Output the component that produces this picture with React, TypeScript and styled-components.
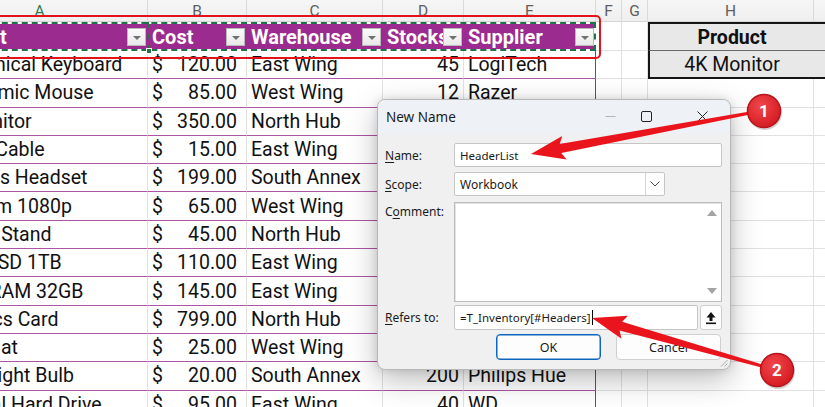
import React from 'react';
import styled, { createGlobalStyle } from 'styled-components';

const GlobalStyle = createGlobalStyle`
  html, body { margin: 0; padding: 0; background: #fff; }
  body { font-family: Roboto, "Liberation Sans", sans-serif; }
  * { box-sizing: border-box; }
`;

const PURPLE = '#9b2b8e';
const ROW_LINE = '#ad54a3';
const GRID = '#e1e1e1';

// sheet column widths (A is partly scrolled out of view)
const W = { A: 216, B: 99, C: 136, D: 81, E: 132, F: 26, G: 26, H: 166, I: 80 };

type Item = [string, number, string, number, string];

const items: Item[] = [
  ['Mechanical Keyboard', 120, 'East Wing', 45, 'LogiTech'],
  ['Ergonomic Mouse', 85, 'West Wing', 12, 'Razer'],
  ['4K Monitor', 350, 'North Hub', 30, 'Dell'],
  ['USB-C Cable', 15, 'East Wing', 300, 'Anker'],
  ['Wireless Headset', 199, 'South Annex', 25, 'Sony'],
  ['Webcam 1080p', 65, 'West Wing', 60, 'Logitech'],
  ['Laptop Stand', 45, 'North Hub', 35, 'Ergotron'],
  ['Gen4 SSD 1TB', 110, 'East Wing', 50, 'Samsung'],
  ['DDR5 RAM 32GB', 145, 'East Wing', 40, 'Corsair'],
  ['Graphics Card', 799, 'North Hub', 8, 'NVIDIA'],
  ['Desk Mat', 25, 'West Wing', 150, 'SteelSeries'],
  ['Color Light Bulb', 20, 'South Annex', 200, 'Philips Hue'],
  ['External Hard Drive', 95, 'East Wing', 40, 'WD'],
];

const Screen = styled.div`
  position: relative;
  width: 825px;
  height: 407px;
  overflow: hidden;
  background: #fff;
`;

const Sheet = styled.div`
  display: flex;
  flex-direction: column;
  width: max-content;
  margin-left: -68px;
  font-size: 19.5px;
  color: #111;
`;

const Row = styled.div<{ $h: number }>`
  display: flex;
  height: ${p => p.$h}px;
`;

const Letters = styled.div<{ $w: number; $active?: boolean }>`
  width: ${p => p.$w}px;
  display: flex;
  align-items: center;
  justify-content: center;
  background: linear-gradient(#f6f6f6, #efefef);
  border-right: 1px solid #dadada;
  border-bottom: 1px solid #d4d4d4;
  font-size: 15.5px;
  color: ${p => (p.$active ? '#2e7d52' : '#5e5e5e')};
`;

const Group = styled.div`
  position: relative;
  display: flex;
`;

const HeadGroup = styled(Group)`
  background: ${PURPLE};
  &::before {
    content: '';
    position: absolute;
    inset: 0;
    border: 2px solid #fff;
    pointer-events: none;
  }
  &::after {
    content: '';
    position: absolute;
    inset: 0;
    border: 2px dashed #217346;
    pointer-events: none;
  }
`;

const RedFrame = styled.span`
  position: absolute;
  top: -7px;
  bottom: -8px;
  left: -10px;
  right: -5px;
  border: 2px solid #e3131b;
  border-radius: 5px;
  z-index: 2;
`;

const HeadCell = styled.div<{ $w: number; $active?: boolean }>`
  position: relative;
  width: ${p => p.$w}px;
  display: flex;
  align-items: center;
  padding-left: 4px;
  color: #fff;
  font-size: 20px;
  font-weight: 700;
  overflow: hidden;
  white-space: nowrap;
  ${p =>
    p.$active &&
    `
    overflow: visible;
    &::after {
      content: '';
      position: absolute;
      top: 0;
      bottom: 0;
      right: -1px;
      border-right: 2px dashed #217346;
      z-index: 1;
    }
  `}
`;

const FillHandle = styled.span`
  position: absolute;
  right: -4px;
  bottom: -3px;
  width: 6px;
  height: 6px;
  background: #217346;
  border: 1px solid #fff;
  z-index: 3;
`;

const FilterButton = styled.span`
  position: absolute;
  right: 2px;
  top: 6px;
  width: 19px;
  height: 18px;
  background: linear-gradient(#fbfbfb, #e9e9e9);
  border: 1px solid #b9b9b9;
  display: flex;
  align-items: center;
  justify-content: center;
  &::after {
    content: '';
    margin-top: 2px;
    border-left: 4px solid transparent;
    border-right: 4px solid transparent;
    border-top: 4px solid #707070;
  }
`;

const Cell = styled.div<{ $w: number; $align?: 'left' | 'right'; $edge?: boolean }>`
  width: ${p => p.$w}px;
  display: flex;
  align-items: center;
  justify-content: ${p => (p.$align === 'right' ? 'flex-end' : 'flex-start')};
  padding: 0 ${p => (p.$align === 'right' ? 4 : 0)}px 0 4px;
  border-bottom: 1px solid ${ROW_LINE};
  border-right: 1px solid ${p => (p.$edge ? PURPLE : GRID)};
  white-space: nowrap;
  overflow: hidden;
`;

const MoneyCell = styled(Cell)`
  justify-content: space-between;
  padding-right: 9px;
`;

const Blank = styled.div<{ $w: number }>`
  width: ${p => p.$w}px;
  border-right: 1px solid ${GRID};
  border-bottom: 1px solid ${GRID};
`;

const LookupCell = styled.div<{ $w: number; $bold?: boolean; $first?: boolean; $last?: boolean; $lead?: boolean }>`
  width: ${p => p.$w}px;
  display: flex;
  align-items: center;
  justify-content: center;
  background: #e8e8e8;
  font-weight: ${p => (p.$bold ? 700 : 400)};
  border-left: ${p => (p.$lead ? '2px solid #151515' : 'none')};
  border-top: ${p => (p.$first ? '2px solid #151515' : 'none')};
  border-bottom: ${p => (p.$last ? '2px solid #151515' : '1px solid #6a6a6a')};
`;

/* ---- dialog ---- */

const Dialog = styled.div`
  position: absolute;
  left: 377px;
  top: 99px;
  width: 354px;
  height: 271px;
  display: flex;
  flex-direction: column;
  background: #f0f0f0;
  border: 1px solid #b8b8b8;
  border-radius: 8px;
  box-shadow: 0 10px 30px rgba(0, 0, 0, 0.26), 0 0 8px rgba(0, 0, 0, 0.12);
  font-family: 'Noto Sans', 'Open Sans', sans-serif;
  font-size: 12px;
  color: #1b1b1b;
  overflow: hidden;
`;

const TitleBar = styled.div`
  height: 33px;
  display: flex;
  align-items: center;
  padding-left: 8px;
  background: #eef2f7;
  font-size: 13.5px;
`;

const TitleText = styled.span`
  flex: 1;
`;

const WinIcon = styled.span<{ $gap: number }>`
  display: flex;
  margin-left: ${p => p.$gap}px;
`;

const Body = styled.div`
  display: flex;
  flex-direction: column;
  padding: 10px 8px 0 7px;
`;

const Field = styled.div<{ $h: number; $mt?: number }>`
  display: grid;
  grid-template-columns: 69px 1fr;
  height: ${p => p.$h}px;
  margin-top: ${p => p.$mt ?? 0}px;
`;

const Label = styled.label<{ $top?: boolean }>`
  display: flex;
  align-items: ${p => (p.$top ? 'flex-start' : 'center')};
  padding-top: ${p => (p.$top ? 1 : 0)}px;
  u {
    text-underline-offset: 2px;
  }
`;

const Box = styled.div<{ $w?: number }>`
  display: flex;
  align-items: center;
  width: ${p => (p.$w ? `${p.$w}px` : 'auto')};
  flex: ${p => (p.$w ? 'none' : '1')};
  background: #fff;
  border: 1px solid #c6c6c6;
  border-radius: 2px;
  padding-left: 5px;
`;

const BoxText = styled.span<{ $size?: number }>`
  flex: 1;
  font-size: ${p => p.$size ?? 12}px;
  color: #1a1a1a;
`;

const Caret = styled.span`
  display: inline-block;
  width: 1px;
  height: 15px;
  margin-left: 1px;
  vertical-align: -3px;
  background: #000;
`;

const DropButton = styled.span`
  width: 19px;
  align-self: stretch;
  display: flex;
  align-items: center;
  justify-content: center;
  border-left: 1px solid #d4d4d4;
`;

const Memo = styled.div`
  display: flex;
  justify-content: flex-end;
  background: #fff;
  border: 1px solid #bdbdbd;
  box-shadow: inset 1px 1px 0 #e2e2e2;
`;

const ScrollTrack = styled.div`
  width: 19px;
  display: flex;
  flex-direction: column;
  justify-content: space-between;
  align-items: center;
  padding: 7px 0 7px;
`;

const Tri = styled.span<{ $up?: boolean }>`
  border-left: 5px solid transparent;
  border-right: 5px solid transparent;
  ${p => (p.$up ? 'border-bottom' : 'border-top')}: 6px solid #a3a3a3;
`;

const InputLine = styled.div`
  display: flex;
  gap: 2px;
`;

const IconButton = styled.span`
  width: 22px;
  display: flex;
  align-items: center;
  justify-content: center;
  background: #fdfdfd;
  border: 1px solid #cdcdcd;
  border-radius: 3px;
`;

const Buttons = styled.div`
  display: flex;
  justify-content: flex-end;
  gap: 15px;
  height: 26px;
  margin-top: 4px;
  padding-right: 1px;
`;

const Button = styled.button<{ $primary?: boolean }>`
  width: 105px;
  font: inherit;
  font-size: 12.5px;
  color: #1b1b1b;
  background: #fdfdfd;
  border: 1px solid ${p => (p.$primary ? '#0a67bd' : '#d0d0d0')};
  box-shadow: ${p => (p.$primary ? 'inset 0 0 0 0.5px #0a67bd' : 'none')};
  border-radius: 4px;
`;

const Grip = styled.svg`
  position: absolute;
  right: 2px;
  bottom: 2px;
`;

const Overlay = styled.svg`
  position: absolute;
  left: 0;
  top: 0;
  pointer-events: none;
`;

// tapered callout arrow: thin at the badge, wider toward the head
function arrowPoints(sx: number, sy: number, tx: number, ty: number) {
  const w0 = 3, w1 = 9, headLen = 30, headW = 24;
  const dx = tx - sx, dy = ty - sy;
  const len = Math.hypot(dx, dy);
  const ux = dx / len, uy = dy / len;
  const nx = -uy, ny = ux;
  const bx = tx - ux * headLen, by = ty - uy * headLen;
  const back = 4;
  const pts = [
    [sx + (nx * w0) / 2, sy + (ny * w0) / 2],
    [bx + (nx * w1) / 2, by + (ny * w1) / 2],
    [bx - ux * back + (nx * headW) / 2, by - uy * back + (ny * headW) / 2],
    [tx, ty],
    [bx - ux * back - (nx * headW) / 2, by - uy * back - (ny * headW) / 2],
    [bx - (nx * w1) / 2, by - (ny * w1) / 2],
    [sx - (nx * w0) / 2, sy - (ny * w0) / 2],
  ];
  return pts.map(p => `${p[0].toFixed(1)},${p[1].toFixed(1)}`).join(' ');
}

function Badge({ x, y, n }: { x: number; y: number; n: number }) {
  return (
    <g>
      <circle cx={x + 1} cy={y + 2} r={17} fill="rgba(0,0,0,0.18)" />
      <circle cx={x} cy={y} r={16.5} fill="url(#badgeFill)" stroke="#b8141b" strokeWidth={1.5} />
      <text
        x={x}
        y={y + 6}
        textAnchor="middle"
        fontFamily="Roboto, 'Liberation Sans', sans-serif"
        fontWeight={700}
        fontSize={17}
        fill="#fff"
      >
        {n}
      </text>
    </g>
  );
}

const money = (v: number) => v.toFixed(2);

export default function App() {
  const heads = [
    { w: W.A, label: 'Product' },
    { w: W.B, label: 'Cost' },
    { w: W.C, label: 'Warehouse' },
    { w: W.D, label: 'Stocks' },
    { w: W.E, label: 'Supplier' },
  ];

  return (
    <Screen>
      <GlobalStyle />
      <Sheet>
        <Row $h={22}>
          <Letters $w={W.A} $active>A</Letters>
          <Letters $w={W.B}>B</Letters>
          <Letters $w={W.C}>C</Letters>
          <Letters $w={W.D}>D</Letters>
          <Letters $w={W.E}>E</Letters>
          <Letters $w={W.F}>F</Letters>
          <Letters $w={W.G}>G</Letters>
          <Letters $w={W.H}>H</Letters>
          <Letters $w={W.I}>I</Letters>
        </Row>

        <Row $h={29}>
          <HeadGroup>
            <RedFrame />
            {heads.map((h, i) => (
              <HeadCell key={h.label} $w={h.w} $active={i === 0}>
                {h.label}
                <FilterButton />
                {i === 0 && <FillHandle />}
              </HeadCell>
            ))}
          </HeadGroup>
          <Blank $w={W.F} />
          <Blank $w={W.G} />
          <LookupCell $w={W.H} $bold $first $lead>Product</LookupCell>
          <LookupCell $w={W.I} $first />
        </Row>

        {items.map((it, i) => (
          <Row $h={28.3} key={it[0]}>
            <Group>
              <Cell $w={W.A}>{it[0]}</Cell>
              <MoneyCell $w={W.B}>
                <span>$</span>
                <span>{money(it[1])}</span>
              </MoneyCell>
              <Cell $w={W.C}>{it[2]}</Cell>
              <Cell $w={W.D} $align="right">{it[3]}</Cell>
              <Cell $w={W.E} $edge>{it[4]}</Cell>
            </Group>
            <Blank $w={W.F} />
            <Blank $w={W.G} />
            {i === 0 ? (
              <>
                <LookupCell $w={W.H} $lead $last>4K Monitor</LookupCell>
                <LookupCell $w={W.I} $last />
              </>
            ) : (
              <>
                <Blank $w={W.H} />
                <Blank $w={W.I} />
              </>
            )}
          </Row>
        ))}
      </Sheet>

      <Dialog>
        <TitleBar>
          <TitleText>New Name</TitleText>
          <WinIcon $gap={0}>
            <svg width="11" height="11" viewBox="0 0 11 11">
              <path d="M0.5 5.5h10" stroke="#b5b5b5" strokeWidth="1" />
            </svg>
          </WinIcon>
          <WinIcon $gap={25}>
            <svg width="11" height="11" viewBox="0 0 11 11">
              <rect x="0.5" y="0.5" width="10" height="10" rx="1.5" fill="none" stroke="#222" strokeWidth="1" />
            </svg>
          </WinIcon>
          <WinIcon $gap={45}>
            <svg width="11" height="11" viewBox="0 0 11 11">
              <path d="M0.5 0.5l10 10M10.5 0.5l-10 10" stroke="#222" strokeWidth="1" />
            </svg>
          </WinIcon>
          <WinIcon $gap={22} />
        </TitleBar>

        <Body>
          <Field $h={24}>
            <Label><span><u>N</u>ame:</span></Label>
            <Box><BoxText $size={11.5}>HeaderList</BoxText></Box>
          </Field>

          <Field $h={24} $mt={5}>
            <Label><span><u>S</u>cope:</span></Label>
            <InputLine>
              <Box $w={211}>
                <BoxText>Workbook</BoxText>
                <DropButton>
                  <svg width="10" height="6" viewBox="0 0 10 6">
                    <path d="M0.5 0.5l4.5 4.5 4.5-4.5" fill="none" stroke="#444" strokeWidth="1" />
                  </svg>
                </DropButton>
              </Box>
            </InputLine>
          </Field>

          <Field $h={100} $mt={6}>
            <Label $top><span>C<u>o</u>mment:</span></Label>
            <Memo>
              <ScrollTrack>
                <Tri $up />
                <Tri />
              </ScrollTrack>
            </Memo>
          </Field>

          <Field $h={25} $mt={3}>
            <Label><span><u>R</u>efers to:</span></Label>
            <InputLine>
              <Box>
                <BoxText $size={11.5}>=T_Inventory[#Headers]<Caret /></BoxText>
              </Box>
              <IconButton>
                <svg width="12" height="14" viewBox="0 0 12 14">
                  <path d="M6 1L1.5 6.5h3V10h3V6.5h3z" fill="#111" />
                  <rect x="1" y="11.5" width="10" height="1.6" fill="#111" />
                </svg>
              </IconButton>
            </InputLine>
          </Field>

          <Buttons>
            <Button $primary>OK</Button>
            <Button>Cancel</Button>
          </Buttons>
        </Body>

        <Grip width="9" height="9" viewBox="0 0 9 9">
          <path d="M8.5 2L2 8.5M8.5 5.5L5.5 8.5" stroke="#a8a8a8" strokeWidth="1" />
        </Grip>
      </Dialog>

      <Overlay width="825" height="407" viewBox="0 0 825 407">
        <defs>
          <radialGradient id="badgeFill" cx="0.4" cy="0.35" r="0.7">
            <stop offset="0" stopColor="#f0474c" />
            <stop offset="1" stopColor="#d3191f" />
          </radialGradient>
        </defs>
        <polygon points={arrowPoints(750, 113, 531, 154)} fill="#ea141c" />
        <polygon points={arrowPoints(762, 366, 592, 318)} fill="#ea141c" />
        <Badge x={764} y={111} n={1} />
        <Badge x={777} y={370} n={2} />
      </Overlay>
    </Screen>
  );
}
